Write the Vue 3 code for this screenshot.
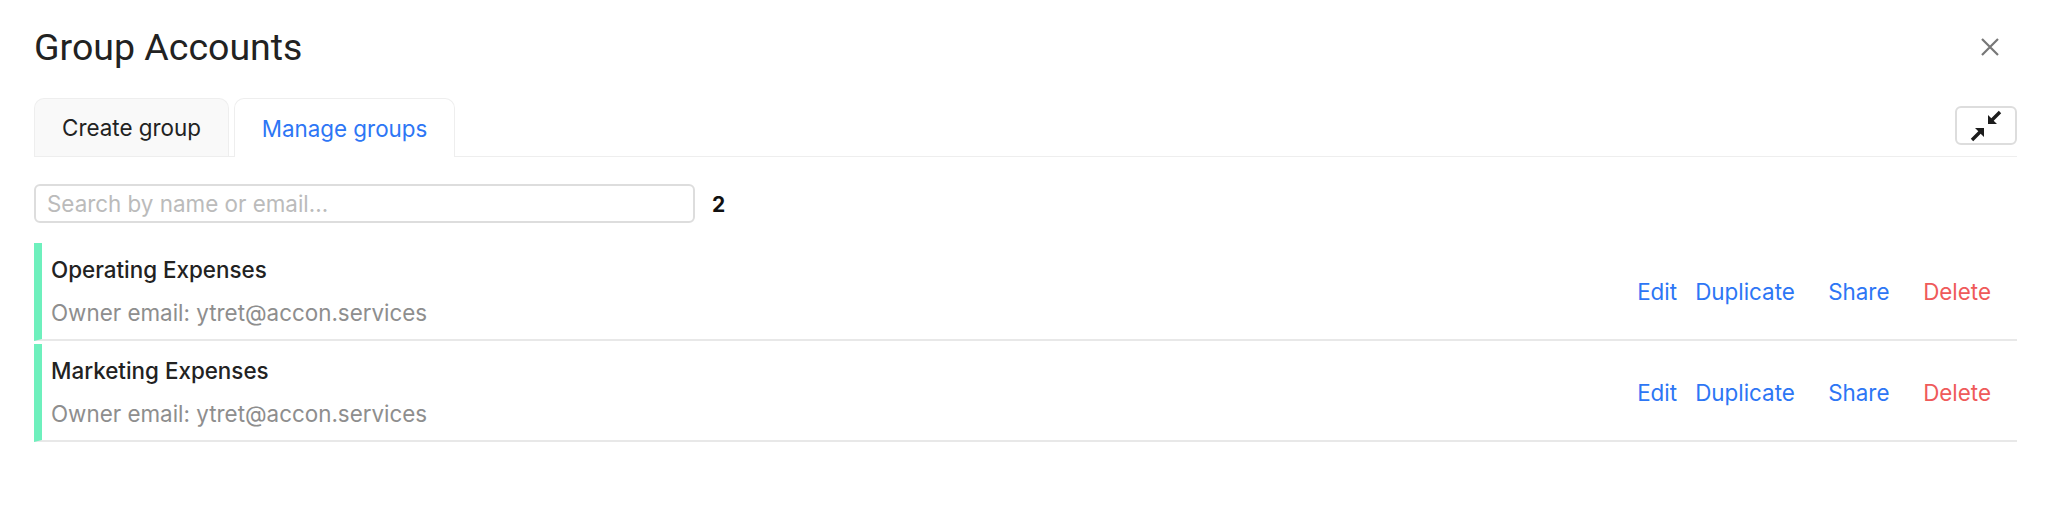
<template>
  <div class="modal">
    <header class="head">
      <h1 class="title">Group Accounts</h1>
      <button class="close" aria-label="Close">
        <svg width="18" height="18" viewBox="0 0 18 18"><path d="M1 1 L17 17 M17 1 L1 17" stroke="#777" stroke-width="2.2" fill="none" /></svg>
      </button>
    </header>
    <div class="tabbar">
      <button class="tab first">Create group</button>
      <button class="tab active">Manage groups</button>
      <button class="collapse" aria-label="Collapse">
        <svg width="32" height="32" viewBox="0 0 32 32">
          <path d="M18 14 V5 L21.300 8.300 L28.800 0.800 L31.200 3.200 L23.700 10.700 L27 14 Z" fill="#1c1c1c" />
          <path d="M14 18 V27 L10.700 23.700 L3.200 31.200 L0.800 28.800 L8.300 21.300 L5 18 Z" fill="#1c1c1c" />
        </svg>
      </button>
    </div>
    <div class="search">
      <input class="search-input" placeholder="Search by name or email..." />
      <span class="count">{{ groups.length }}</span>
    </div>
    <ul class="list">
      <li v-for="g in groups" :key="g.name" class="row">
        <div class="info">
          <div class="name">{{ g.name }}</div>
          <div class="owner">Owner email: {{ g.email }}</div>
        </div>
        <div class="actions">
          <a class="link edit">Edit</a>
          <a class="link dup">Duplicate</a>
          <a class="link share">Share</a>
          <a class="link del">Delete</a>
        </div>
      </li>
    </ul>
  </div>
</template>

<script setup>
const groups = [
  { name: 'Operating Expenses', email: 'ytret@accon.services' },
  { name: 'Marketing Expenses', email: 'ytret@accon.services' }
]
</script>

<style>
html, body { background: #fff; }
</style>

<style scoped>
.modal {
  padding: 0 31px 0 34px;
  font-family: Inter, "Liberation Sans", sans-serif;
  color: #222;
}
.head {
  display: flex;
  justify-content: space-between;
  align-items: center;
  height: 98px;
}
.title {
  margin: 0 0 4px;
  font-family: Roboto, sans-serif;
  font-weight: 400;
  font-size: 37.5px;
  color: #222;
}
.close {
  border: 0;
  background: none;
  padding: 0;
  margin: 0 18px 4px 0;
  display: flex;
}
.tabbar {
  display: flex;
  gap: 5px;
  align-items: flex-end;
  height: 59px;
  box-sizing: border-box;
  border-bottom: 1px solid #eee;
}
.tab {
  height: 58px;
  border: 1px solid #eee;
  border-bottom: 0;
  border-radius: 10px 10px 0 0;
  background: #fff;
  font: 400 22.4px Inter, sans-serif;
  color: #222;
  padding: 0;
}
.tab.first {
  width: 195px;
  background: #f9f9f9;
}
.tab.active {
  width: 221px;
  color: #2d76f5;
  height: 59px;
  margin-bottom: -1px;
}
.collapse {
  margin-left: auto;
  align-self: flex-start;
  margin-top: 8px;
  width: 62px;
  height: 39px;
  border: 2px solid #ddd;
  border-radius: 6px;
  background: #fff;
  padding: 0;
  display: flex;
  align-items: center;
  justify-content: center;
}
.search {
  display: flex;
  align-items: center;
  margin-top: 27px;
  gap: 17px;
}
.search-input {
  width: 661px;
  height: 39px;
  box-sizing: border-box;
  border: 2px solid #ddd;
  border-radius: 6px;
  padding: 0 11px;
  font: 400 22.4px Inter, sans-serif;
  outline: none;
}
.search-input::placeholder { color: #bbb; }
.count {
  font-weight: 700;
  font-size: 21px;
  margin-top: 2px;
  color: #111;
}
.list {
  list-style: none;
  margin: 20px 0 0;
  padding: 0;
}
.row {
  display: flex;
  justify-content: space-between;
  align-items: center;
  height: 98px;
  box-sizing: border-box;
  margin-bottom: 3px;
  border-left: 8px solid #6ef0bd;
  border-bottom: 2px solid #e8e8e8;
  padding-left: 9px;
}
.info {
  margin-bottom: 1px;
}
.name {
  font-size: 22.4px;
  font-weight: 500;
  color: #222;
  margin-bottom: 16px;
}
.owner {
  font-size: 22.4px;
  color: #8e8e8e;
}
.actions {
  display: flex;
  font-size: 22.4px;
  padding-right: 26px;
}
.link { color: #2d76f5; }
.edit { width: 58px; }
.dup { width: 133px; }
.share { width: 95px; }
.del { color: #ef5a5a; }
</style>
